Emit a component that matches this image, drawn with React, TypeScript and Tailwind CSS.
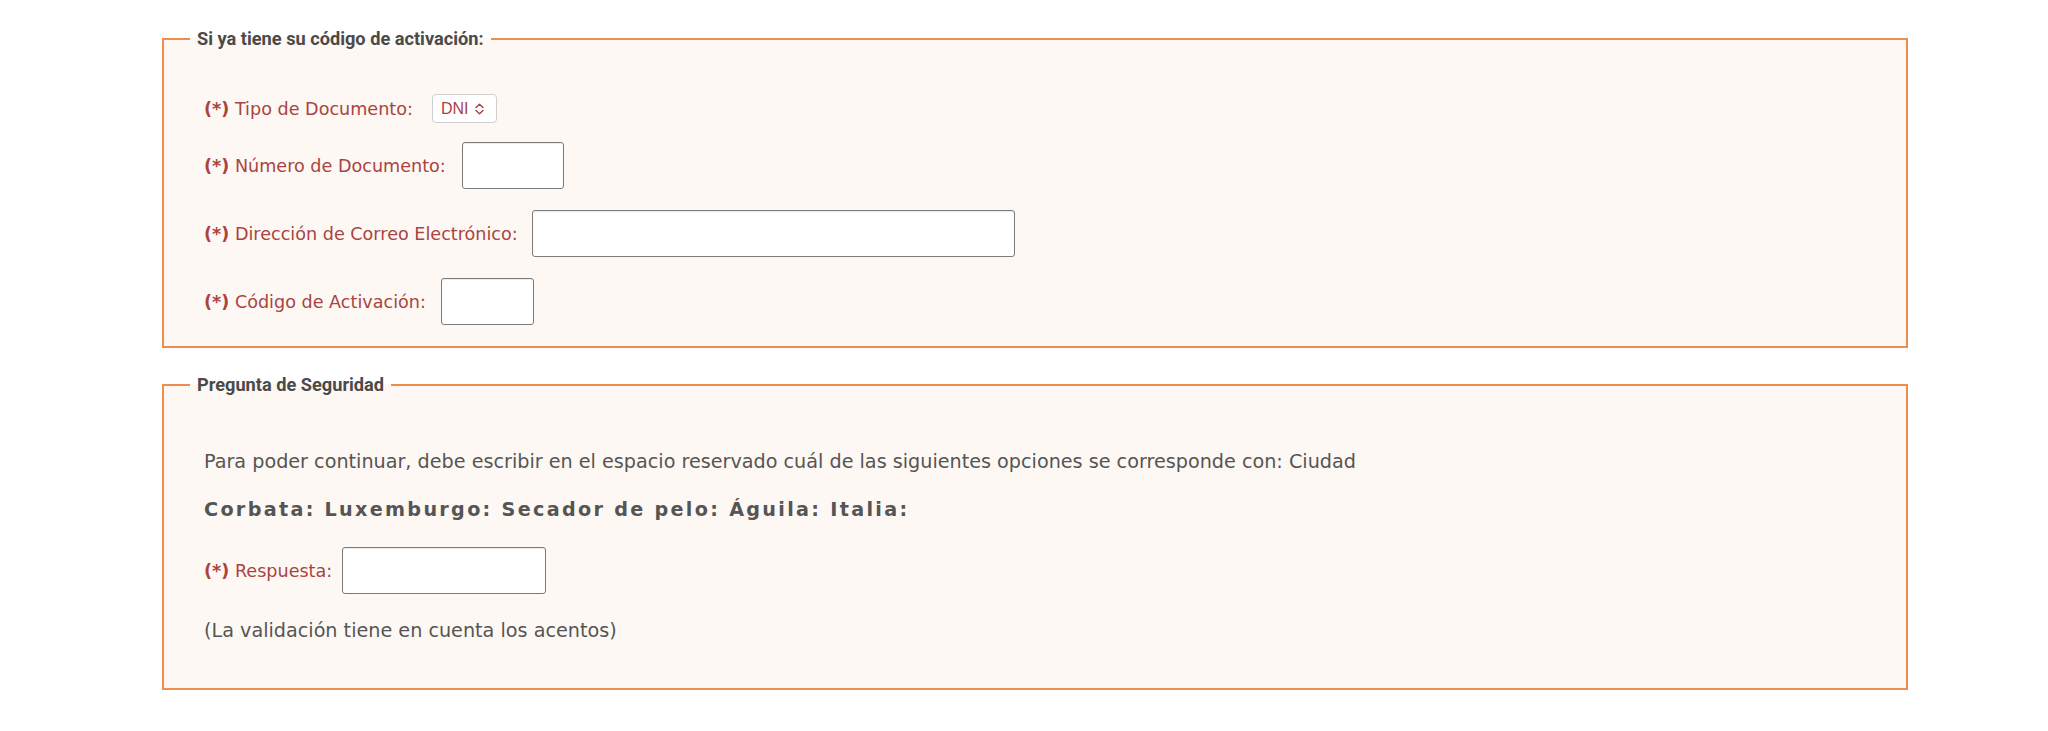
import React from "react";

const labelCls =
  "text-[#a94442] text-[17.6px] leading-[24px] whitespace-nowrap";

function Req() {
  return <span className="font-bold">(*)</span>;
}

function TextBox({ w }: { w: string }) {
  return (
    <input
      type="text"
      className={`${w} h-[47px] shrink-0 rounded-[3px] border border-[#7b7b7b] bg-white shadow-[inset_0_1px_1px_rgba(0,0,0,0.08)] outline-none`}
    />
  );
}

function UpDown() {
  return (
    <svg width="11" height="14" viewBox="0 0 11 14" fill="none" className="ml-[5px]">
      <path d="M2 5.5 L5.5 2.2 L9 5.5" stroke="#a94442" strokeWidth="1.5" strokeLinecap="round" strokeLinejoin="round" />
      <path d="M2 8.5 L5.5 11.8 L9 8.5" stroke="#a94442" strokeWidth="1.5" strokeLinecap="round" strokeLinejoin="round" />
    </svg>
  );
}

export default function App() {
  return (
    <div
      className="min-h-[731px] w-full bg-white pt-[30px]"
      style={{ fontFamily: '"DejaVu Sans", Verdana, sans-serif' }}
    >
      <div className="ml-[162px] w-[1746px]">
        <fieldset className="m-0 border-2 border-[#ef8c50] bg-[#fdf8f3] p-0">
          <legend className="ml-[26px] px-[7px] font-['Roboto',sans-serif] text-[18.2px] font-bold leading-[18px] text-[#4a4a4a]">
            Si ya tiene su código de activación:
          </legend>
          <div className="flex flex-col pl-[40px] pt-[46px] pb-[21px]">
            <div className="flex h-[29px] items-center">
              <span className={labelCls}>
                <Req /> Tipo de Documento:
              </span>
              <div className="ml-[19px] flex h-[29px] w-[65px] items-center rounded-[4px] border border-[#cfcfcf] bg-white pl-[8px] font-['Liberation_Sans',sans-serif] text-[16px] text-[#a94442]">
                DNI
                <UpDown />
              </div>
            </div>
            <div className="mt-[19px] flex items-center">
              <span className={labelCls}>
                <Req /> Número de Documento:
              </span>
              <div className="ml-[16px]">
                <TextBox w="w-[102px]" />
              </div>
            </div>
            <div className="mt-[21px] flex items-center">
              <span className={labelCls}>
                <Req /> Dirección de Correo Electrónico:
              </span>
              <div className="ml-[14px]">
                <TextBox w="w-[483px]" />
              </div>
            </div>
            <div className="mt-[21px] flex items-center">
              <span className={labelCls}>
                <Req /> Código de Activación:
              </span>
              <div className="ml-[15px]">
                <TextBox w="w-[93px]" />
              </div>
            </div>
          </div>
        </fieldset>

        <fieldset className="m-0 mt-[28px] border-2 border-[#ef8c50] bg-[#fdf8f3] p-0">
          <legend className="ml-[26px] px-[7px] font-['Roboto',sans-serif] text-[18.2px] font-bold leading-[18px] text-[#4a4a4a]">
            Pregunta de Seguridad
          </legend>
          <div className="flex flex-col pl-[40px] pt-[56px] pb-[45px] text-[19.2px] leading-[24px] text-[#555555]">
            <p>
              Para poder continuar, debe escribir en el espacio reservado cuál de las siguientes opciones se corresponde con: Ciudad
            </p>
            <p className="mt-[24px] font-bold tracking-[2.3px]">
              Corbata: Luxemburgo: Secador de pelo: Águila: Italia:
            </p>
            <div className="mt-[25px] flex items-center">
              <span className={labelCls}>
                <Req /> Respuesta:
              </span>
              <div className="ml-[10px]">
                <TextBox w="w-[204px]" />
              </div>
            </div>
            <p className="mt-[25px]">(La validación tiene en cuenta los acentos)</p>
          </div>
        </fieldset>
      </div>
    </div>
  );
}
